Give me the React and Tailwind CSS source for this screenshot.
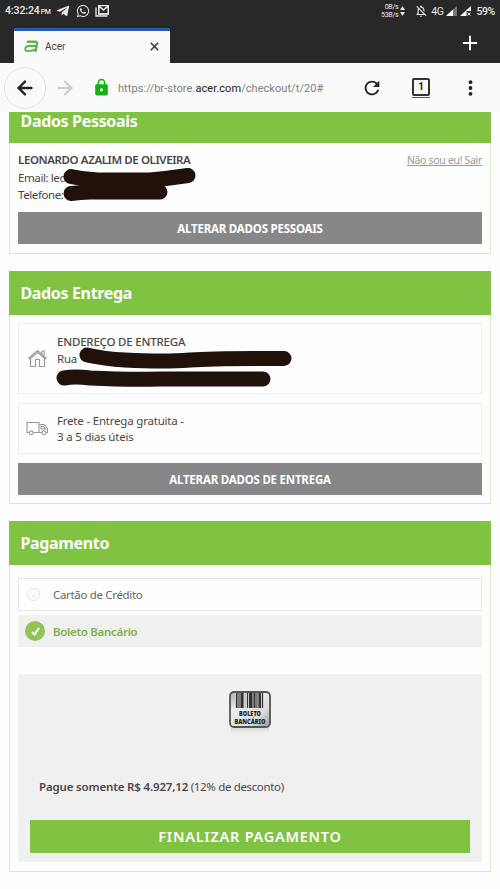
import React from 'react';
import { ArrowLeft, ArrowRight, X, Plus } from 'lucide-react';
import { FaTelegramPlane, FaWhatsapp } from 'react-icons/fa';
import { MdLock, MdRefresh, MdOutlineNotificationsOff } from 'react-icons/md';

const BARCODE = [
  [8, 1.5], [10.5, 1], [12.5, 3], [19, 1], [21, 3.5], [25.5, 2], [28.5, 1], [30.5, 2.5], [34, 1],
];

function AcerIcon() {
  return (
    <svg width="15" height="13" viewBox="0 0 15 13" fill="none" stroke="#5cb947">
      <path d="M3 1.8H11.2Q13.4 1.8 13 3.6L11.3 12" strokeWidth="2.5" />
      <path d="M12 6H5Q1.8 6 1.3 8.7Q1 11.1 3.6 11.1Q7.5 11.1 11.6 9.3" strokeWidth="1.9" />
    </svg>
  );
}

function GmailIcon() {
  return (
    <svg width="15" height="12" viewBox="0 0 15 12" fill="none" stroke="#e8e8e8">
      <path d="M1 2.5V11H12.5" strokeWidth="1.3" />
      <path d="M3.8 9V.9L8.5 5L13.2.9V9Z" strokeWidth="1.6" />
      <path d="M3 .7H14M3 8.8H14" strokeWidth="1.2" />
    </svg>
  );
}

function StatusBar() {
  return (
    <div className="flex h-[22px] items-center justify-between px-[5px] text-[#e8e8e8]">
      <div className="flex items-center">
        <span className="w-[51px] pt-px text-[10.5px] leading-3 font-medium tracking-[-0.1px] whitespace-nowrap">
          4:32:24<span className="ml-px text-[7px] tracking-[-0.4px]">PM</span>
        </span>
        <FaTelegramPlane size={14} />
        <FaWhatsapp size={14} className="ml-[6px]" />
        <span className="ml-[5px]"><GmailIcon /></span>
      </div>
      <div className="flex items-center">
        <div className="text-right text-[7px] leading-[8px] tracking-[-0.3px]">
          <p>0B/s</p>
          <p>53B/s</p>
        </div>
        <svg className="ml-[2px]" width="5" height="10" viewBox="0 0 5 10" fill="#e8e8e8">
          <path d="M2.5 0L5 4H0ZM2.5 10L5 6H0Z" />
        </svg>
        <MdOutlineNotificationsOff size={14} className="ml-[9px]" />
        <span className="ml-[3px] pt-px text-[10.5px] leading-3 tracking-[-0.5px]">4G</span>
        <svg className="ml-[3px]" width="11" height="10" viewBox="0 0 11 10">
          <path d="M11 0V10H0Z" fill="#777" />
          <path d="M7 3.6V10H0Z" fill="#fff" />
        </svg>
        <svg className="ml-[3px]" width="11" height="10" viewBox="0 0 11 10">
          <path d="M11 0V5H6.5V10H0Z" fill="#fff" />
          <path d="M7.5 6.5L10.5 9.5M10.5 6.5L7.5 9.5" stroke="#fff" />
        </svg>
        <span className="ml-[5px] pt-px text-[10.5px] leading-3 font-medium tracking-[-0.35px]">59%</span>
      </div>
    </div>
  );
}

function TabStrip() {
  return (
    <div className="flex h-[41px] items-end justify-between pl-[14px]">
      <div className="flex h-[35px] w-[156px] items-center border-t-[3px] border-[#215eac] bg-[#fafafa] pr-[9px] pb-px pl-[10px] text-[#444]">
        <AcerIcon />
        <span className="ml-[6px] text-[10px]">Acer</span>
        <X size={13} strokeWidth={3.2} className="ml-auto" />
      </div>
      <Plus size={22} strokeWidth={2.1} className="mr-[19px] mb-[9px] text-white" />
    </div>
  );
}

function Toolbar() {
  return (
    <div className="flex h-[49px] items-center bg-[#fafafa] pl-[4px] text-[#222]">
      <div className="flex h-[42px] w-[42px] items-center justify-center rounded-full border border-[#e2e2e2]">
        <ArrowLeft size={22} strokeWidth={2.6} />
      </div>
      <ArrowRight size={22} strokeWidth={2.3} className="ml-[8px] text-[#ccc]" />
      <MdLock size={19} className="ml-[16px] text-[#12b312]" />
      <p className="ml-[7px] w-[207px] pt-[3px] text-[11px] tracking-[0.06px] whitespace-nowrap text-[#808080]">
        https://br-store.<span className="text-[#222]">acer.com</span>/checkout/t/20#
      </p>
      <MdRefresh size={22} className="ml-[36px]" />
      <div className="ml-[29px] flex w-[18px] flex-col gap-px">
        <div className="flex h-[18px] items-center justify-center rounded-[2px] border-2 border-[#333] text-[10px] font-bold">1</div>
        <div className="h-px bg-[#555]" />
      </div>
      <svg className="ml-[38px]" width="5" height="16" viewBox="0 0 5 16" fill="#222">
        <circle cx="2.5" cy="2.2" r="1.9" />
        <circle cx="2.5" cy="8" r="1.9" />
        <circle cx="2.5" cy="13.8" r="1.9" />
      </svg>
    </div>
  );
}

function SectionTitle({ children }) {
  return (
    <div className="-mx-px flex h-11 shrink-0 items-center bg-[#80c342] pl-[11.5px] text-[16px] font-bold tracking-[-0.35px] text-white">
      {children}
    </div>
  );
}

function GrayButton({ children }) {
  return (
    <button className="flex h-8 w-full items-center justify-center bg-[#878789] pt-px text-[11.5px] font-bold tracking-[-0.22px] text-white">
      {children}
    </button>
  );
}

function HouseIcon() {
  return (
    <svg width="19" height="19" viewBox="0 0 19 19" fill="none" stroke="#999" strokeWidth="1.1">
      <path d="M.8 9L9.5 1.5L18.2 9L17.2 10L9.5 3.5L1.8 10Z" />
      <path d="M2.5 9.5V17.5H7.5V10.5H11.5V17.5H16.5V9.5M14 5V2H16.2V7" />
    </svg>
  );
}

function TruckIcon() {
  return (
    <svg width="23" height="15" viewBox="0 0 23 15" fill="none" stroke="#999" strokeWidth="1.1">
      <path d="M3.2 11.5H1V1.5H13V11.5H7.2M13 3.5H18L21.5 7.5V11.5H20M13 11.5H16M15 5.5H17.5L19.5 8H15Z" />
      <circle cx="5.2" cy="11.8" r="1.9" />
      <circle cx="18" cy="11.8" r="1.9" />
    </svg>
  );
}

function BoletoIcon() {
  return (
    <svg width="44" height="44" viewBox="0 0 44 44">
      <defs>
        <linearGradient id="plate" x1="0" y1="0" x2="1" y2="1">
          <stop offset="0" stopColor="#aaa" />
          <stop offset="0.3" stopColor="#eee" />
          <stop offset="0.7" stopColor="#ddd" />
          <stop offset="1" stopColor="#999" />
        </linearGradient>
        <linearGradient id="shadow" x1="0" y1="0" x2="0" y2="1">
          <stop offset="0" stopColor="#ccc" />
          <stop offset="1" stopColor="#f0f0f0" />
        </linearGradient>
      </defs>
      <rect x="3" y="35" width="38" height="8" fill="url(#shadow)" />
      <rect x="2" y="2" width="40" height="35" rx="4" fill="url(#plate)" stroke="#555" strokeWidth="1.8" />
      <rect x="7" y="3" width="29" height="15" fill="#ccc" />
      {BARCODE.map(([x, w]) => (
        <rect key={x} x={x} y="3" width={w} height="15" fill="#333" />
      ))}
      <g fontFamily="Noto Sans, sans-serif" fontWeight="900" fontSize="6.6" fill="#222" textAnchor="middle">
        <text x="22" y="26" textLength="22" lengthAdjust="spacingAndGlyphs">BOLETO</text>
        <text x="22" y="34" textLength="31" lengthAdjust="spacingAndGlyphs">BANCÁRIO</text>
      </g>
    </svg>
  );
}

// Marker strokes that hide the customer's private data
function Redactions() {
  return (
    <svg className="pointer-events-none absolute top-0 left-0" width="500" height="889" viewBox="0 0 500 889" fill="none" stroke="#20110a" strokeLinecap="round" strokeLinejoin="round">
      <path d="M71 176.5Q84 179.5 98 180H150Q168 178.500 188 175.5" strokeWidth="15" />
      <path d="M71 193.5Q80 192.5 90 192H160" strokeWidth="15" />
      <path d="M87 355Q105 359 125 360Q165 362 190 360Q215 358 284 358.5" strokeWidth="15" />
      <path d="M64 378Q75 376 90 378Q130 380 160 379H263" strokeWidth="15" />
    </svg>
  );
}

export default function App() {
  return (
    <div className="relative flex h-[889px] w-[500px] flex-col overflow-hidden bg-[#fefefe] font-['Noto_Sans',sans-serif] text-[#4c4648]">
      <header className="shrink-0 bg-[#282828] font-[Roboto,sans-serif]">
        <StatusBar />
        <TabStrip />
        <Toolbar />
      </header>

      <main className="flex flex-col px-[9px]">
        <section className="h-[142px] border border-t-0 border-[#d5ebc2]">
          <div className="-mx-px flex h-[31px] items-start bg-[#80c342] pl-[11.5px] text-[16px] leading-[18px] font-bold tracking-[-0.33px] text-white">
            Dados Pessoais
          </div>
          <div className="px-2">
            <div className="flex h-[69px] justify-between pt-[8px] text-[11.5px] leading-[17.5px] tracking-[-0.4px]">
              <div>
                <p className="font-semibold tracking-[-0.4px]">LEONARDO AZALIM DE OLIVEIRA</p>
                <p>Email: leo</p>
                <p>Telefone:</p>
              </div>
              <a href="#" className="pt-px text-[10.5px] tracking-[-0.32px] text-[#999] underline">Não sou eu! Sair</a>
            </div>
            <GrayButton>ALTERAR DADOS PESSOAIS</GrayButton>
          </div>
        </section>

        <section className="mt-[17px] h-[233px] border border-t-0 border-[#d5ebc2]">
          <SectionTitle>Dados Entrega</SectionTitle>
          <div className="px-2 pt-2">
            <div className="flex h-[71px] items-center border border-[#ededed] pl-[9px]">
              <HouseIcon />
              <div className="ml-[10px] h-[52px] text-[11.5px] leading-[17px] tracking-[-0.2px]">
                <p className="font-medium">ENDEREÇO DE ENTREGA</p>
                <p>Rua</p>
              </div>
            </div>
            <div className="mt-[9px] flex h-[51px] items-center border border-[#ededed] pl-[7px]">
              <TruckIcon />
              <div className="ml-[8px] text-[11.5px] leading-[15.5px] tracking-[-0.2px]">
                <p>Frete - Entrega gratuita -</p>
                <p>3 a 5 dias úteis</p>
              </div>
            </div>
            <div className="mt-[9px]">
              <GrayButton>ALTERAR DADOS DE ENTREGA</GrayButton>
            </div>
          </div>
        </section>

        <section className="mt-[17px] h-[351px] border border-t-0 border-[#d5ebc2]">
          <SectionTitle>Pagamento</SectionTitle>
          <div className="px-2 pt-[13px] text-[11.5px]">
            <div className="flex h-[33px] items-center border border-[#e6e6e6] pl-[8px] text-[#666]">
              <span className="flex h-[13px] w-[13px] items-center justify-center rounded-full border border-[#e3e3e3]">
                <svg width="6" height="6" viewBox="0 0 9 9" fill="none" stroke="#eee" strokeWidth="2">
                  <path d="M1 5L3.5 7.5L8 1" />
                </svg>
              </span>
              <span className="ml-[13px] tracking-[-0.33px]">Cartão de Crédito</span>
            </div>
            <div className="mt-1 flex h-8 items-center bg-[#f0f0f0] pl-[7px] font-semibold text-[#80b046]">
              <span className="flex h-5 w-5 items-center justify-center rounded-full bg-[#94c355]">
                <svg width="9" height="9" viewBox="0 0 9 9" fill="none" stroke="#fff" strokeWidth="2">
                  <path d="M1 5L3.5 7.5L8 1" />
                </svg>
              </span>
              <span className="ml-[8px] pt-px tracking-[-0.3px]">Boleto Bancário</span>
            </div>
            <div className="mt-[27px] flex h-[188px] flex-col bg-[#f0f0f0] px-3">
              <div className="mt-[16px] flex h-[44px] justify-center">
                <BoletoIcon />
              </div>
              <p className="mt-[45px] ml-[9px] text-[11.5px] leading-4 tracking-[-0.35px]">
                <span className="font-semibold tracking-[-0.16px]">Pague somente R$ 4.927,12</span> (12% de desconto)
              </p>
              <button className="mt-[25px] flex h-[33px] items-center justify-center rounded-[1px] bg-[#80c342] pt-px text-[14.5px] font-semibold tracking-[0.75px] text-white">
                FINALIZAR PAGAMENTO
              </button>
            </div>
          </div>
        </section>
      </main>
      <Redactions />
    </div>
  );
}
